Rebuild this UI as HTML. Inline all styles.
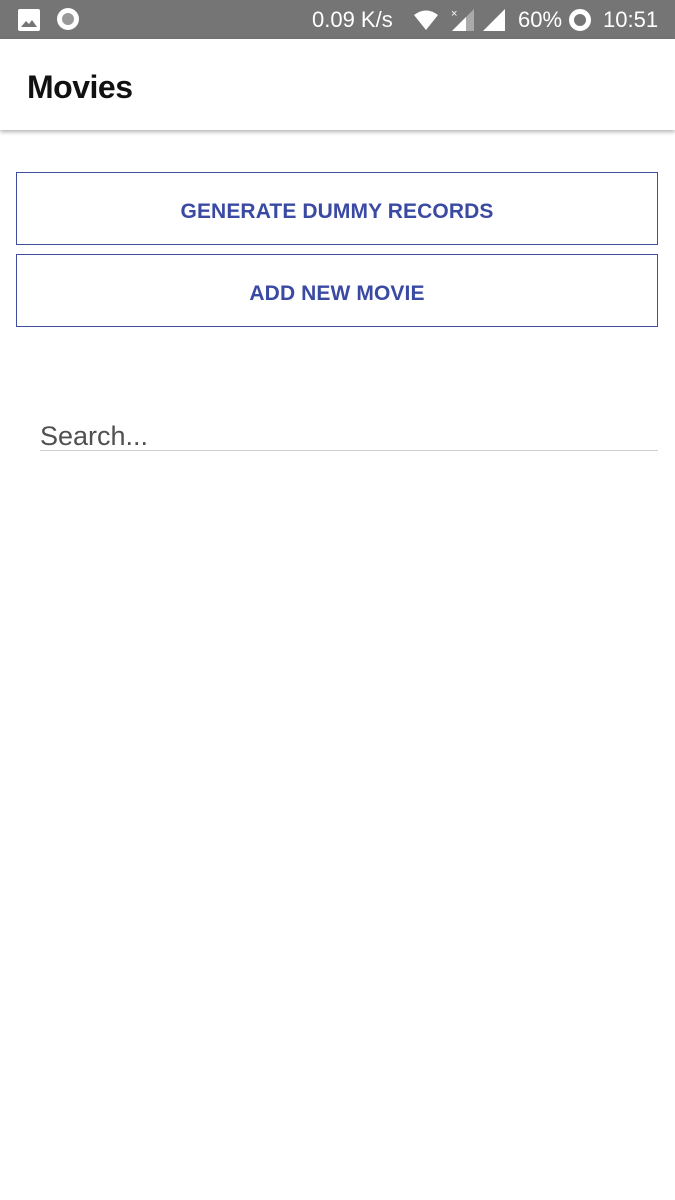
<!DOCTYPE html>
<html><head><meta charset="utf-8"><style>
body{margin:0;width:675px;height:1200px;background:#fff;font-family:"Liberation Sans",sans-serif;position:relative;overflow:hidden}
.sb{position:absolute;left:0;top:0;width:675px;height:39px;background:#757575;color:#fff;font-size:22px}
.bar{position:absolute;left:0;top:39px;width:675px;height:91px;background:#fff;box-shadow:0 2px 4px rgba(0,0,0,.3)}
.bar h1{position:absolute;left:27px;top:30px;margin:0;font-size:32px;font-weight:bold;color:#111;letter-spacing:-0.5px}
.btn{position:absolute;left:16px;width:640px;height:71px;border:1px solid #3f4ea0;color:#3a4aa3;font-size:21px;font-weight:bold;text-align:center;line-height:77px;letter-spacing:0.1px}
.search{position:absolute;left:40px;top:421px;font-size:27px;color:#505050}
.line{position:absolute;left:40px;top:450px;width:618px;height:1px;background:#d0d0d0}
</style></head><body>
<div class="sb">
<svg style="position:absolute;left:18px;top:9px" width="22" height="22"><rect x="0" y="0" width="22" height="22" rx="2" fill="#fff"/><path d="M3 18 L8 12 L11 15 L14 11 L19 18Z" fill="#757575"/></svg>
<svg style="position:absolute;left:56px;top:7px" width="24" height="24"><circle cx="12" cy="12" r="11" fill="#fff"/><circle cx="12" cy="12" r="6" fill="#999"/></svg>
<span style="position:absolute;left:312px;top:7px">0.09 K/s</span>
<svg style="position:absolute;left:412px;top:9px" width="28" height="22"><path d="M2 6 Q14 -3 26 6 L14 21Z" fill="#fff"/></svg>
<svg style="position:absolute;left:450px;top:7px" width="26" height="24"><path d="M24 2 L24 24 L2 24Z" fill="#aaa"/><path d="M16 10 L16 24 L2 24Z" fill="#fff"/><text x="1" y="10" font-size="11" fill="#fff">×</text></svg>
<svg style="position:absolute;left:482px;top:9px" width="24" height="22"><path d="M23 0 L23 22 L1 22Z" fill="#fff"/></svg>
<span style="position:absolute;left:518px;top:7px">60%</span>
<svg style="position:absolute;left:568px;top:8px" width="24" height="24"><circle cx="12" cy="12" r="8.5" fill="none" stroke="#fff" stroke-width="5"/></svg>
<span style="position:absolute;left:603px;top:7px">10:51</span>
</div>
<div class="bar"><h1>Movies</h1></div>
<div class="btn" style="top:172px">GENERATE DUMMY RECORDS</div>
<div class="btn" style="top:254px">ADD NEW MOVIE</div>
<div class="search">Search...</div>
<div class="line"></div>
</body></html>
